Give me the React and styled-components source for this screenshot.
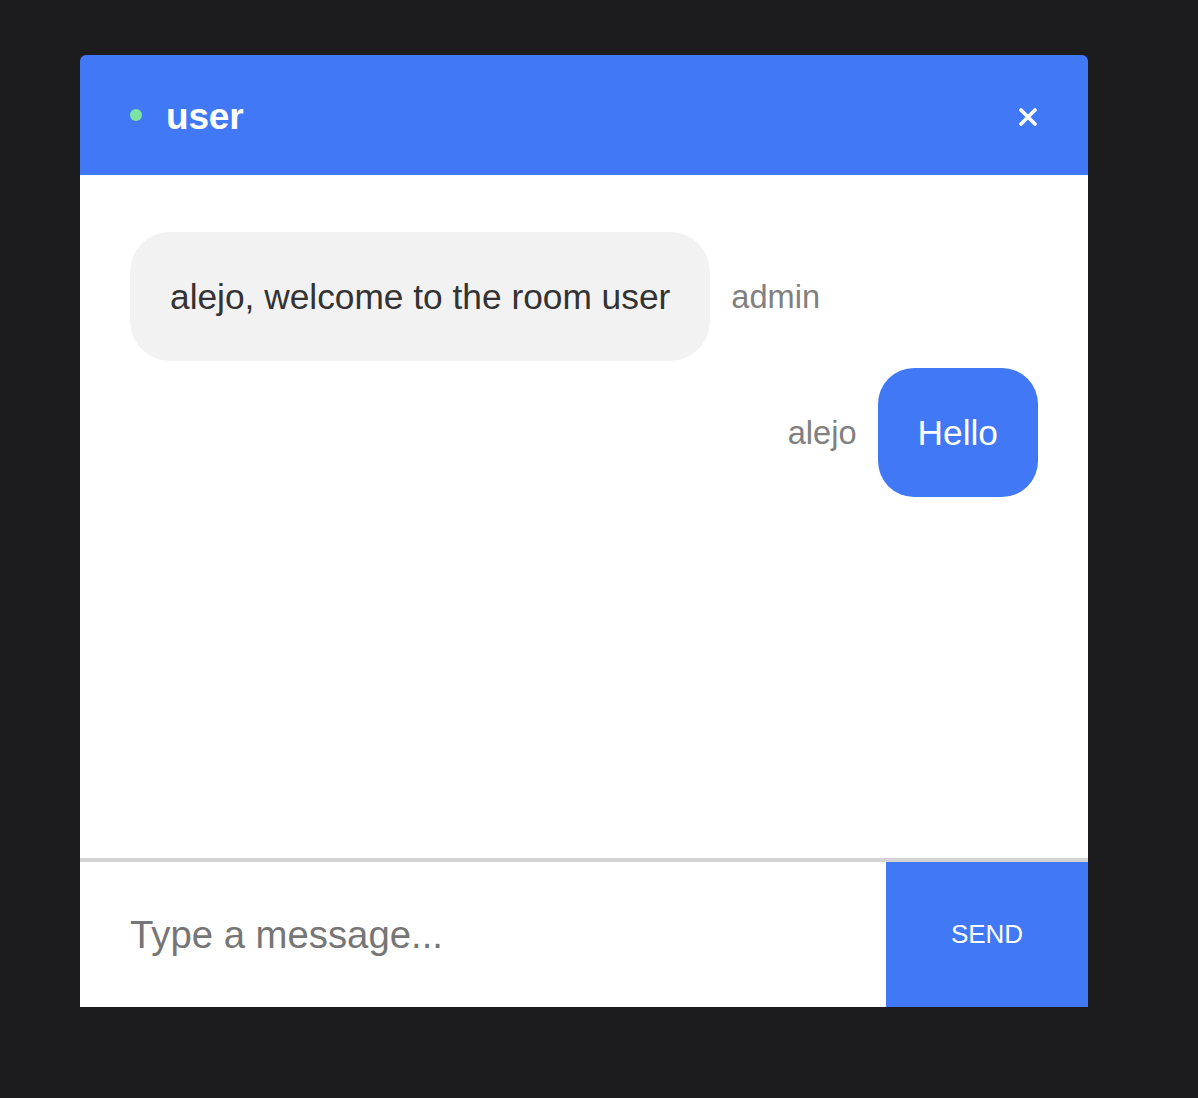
import React, { useState } from "react";
import styled, { createGlobalStyle } from "styled-components";

const GlobalStyle = createGlobalStyle`
  html, body {
    margin: 0;
    padding: 0;
    background: #1c1c1e;
  }
  body {
    font-family: "Liberation Sans", Arial, sans-serif;
  }
`;

// Page wrapper
const Page = styled.div`
  min-height: 1098px;
  padding: 55px 0 0 80px;
  box-sizing: border-box;
`;

// Chat window
const ChatWindow = styled.div`
  width: 1008px;
  display: flex;
  flex-direction: column;
`;

// Header
const Header = styled.div`
  height: 120px;
  background: #4178f5;
  border-radius: 6px 6px 0 0;
  display: flex;
  align-items: center;
  padding: 0 50px;
  box-sizing: border-box;
`;

const OnlineDot = styled.span`
  width: 12px;
  height: 12px;
  border-radius: 50%;
  background: #7de3a4;
  margin-right: 24px;
`;

const RoomName = styled.h2`
  margin: 0;
  flex: 1;
  color: #fff;
  font-size: 37px;
  font-weight: 700;
  letter-spacing: -0.2px;
  padding-top: 3px;
`;

const CloseButton = styled.button`
  background: none;
  border: none;
  padding: 0;
  width: 20px;
  height: 20px;
  display: flex;
  align-items: center;
  justify-content: center;
  cursor: pointer;
  margin-top: 3px;
`;

// Messages
const MessageList = styled.div`
  height: 683px;
  background: #fff;
  padding: 57px 50px 0;
  box-sizing: border-box;
  display: flex;
  flex-direction: column;
  gap: 7px;
`;

const MessageRow = styled.div`
  display: flex;
  align-items: center;
  gap: 21px;
  flex-direction: ${(p) => (p.$own ? "row-reverse" : "row")};
`;

const Bubble = styled.div`
  padding: 44px 40px;
  height: 129px;
  box-sizing: border-box;
  line-height: 41px;
  font-size: 35.3px;
  border-radius: ${(p) => (p.$own ? "36px" : "40px")};
  background: ${(p) => (p.$own ? "#4178f5" : "#f2f2f2")};
  color: ${(p) => (p.$own ? "#fff" : "#333")};
`;

const Author = styled.span`
  font-size: 32.6px;
  color: #808080;
`;

// Composer
const Composer = styled.form`
  height: 149px;
  display: flex;
  border-top: 4px solid #d3d3d3;
  background: #fff;
  box-sizing: border-box;
`;

const MessageInput = styled.input`
  flex: 1;
  border: none;
  outline: none;
  padding: 0 50px;
  font-family: inherit;
  font-size: 38.3px;
  color: #333;
  background: #fff;

  &::placeholder {
    color: #767676;
  }
`;

const SendButton = styled.button`
  width: 202px;
  border: none;
  background: #4178f5;
  color: #fff;
  font-family: inherit;
  font-size: 26px;
  cursor: pointer;
`;

const messages = [
  { id: 1, user: "admin", text: "alejo, welcome to the room user" },
  { id: 2, user: "alejo", text: "Hello", own: true },
];

export default function App() {
  const [text, setText] = useState("");

  return (
    <Page>
      <GlobalStyle />
      <ChatWindow>
        <Header>
          <OnlineDot />
          <RoomName>user</RoomName>
          <CloseButton aria-label="close">
            <svg width="18" height="18" viewBox="0 0 18 18">
              <path d="M2 2L16 16M16 2L2 16" stroke="#fff" strokeWidth="3.6" strokeLinecap="round" />
            </svg>
          </CloseButton>
        </Header>
        <MessageList>
          {messages.map((m) => (
            <MessageRow key={m.id} $own={m.own}>
              <Bubble $own={m.own}>{m.text}</Bubble>
              <Author>{m.user}</Author>
            </MessageRow>
          ))}
        </MessageList>
        <Composer onSubmit={(e) => e.preventDefault()}>
          <MessageInput
            placeholder="Type a message..."
            value={text}
            onChange={(e) => setText(e.target.value)}
          />
          <SendButton type="submit">SEND</SendButton>
        </Composer>
      </ChatWindow>
    </Page>
  );
}
